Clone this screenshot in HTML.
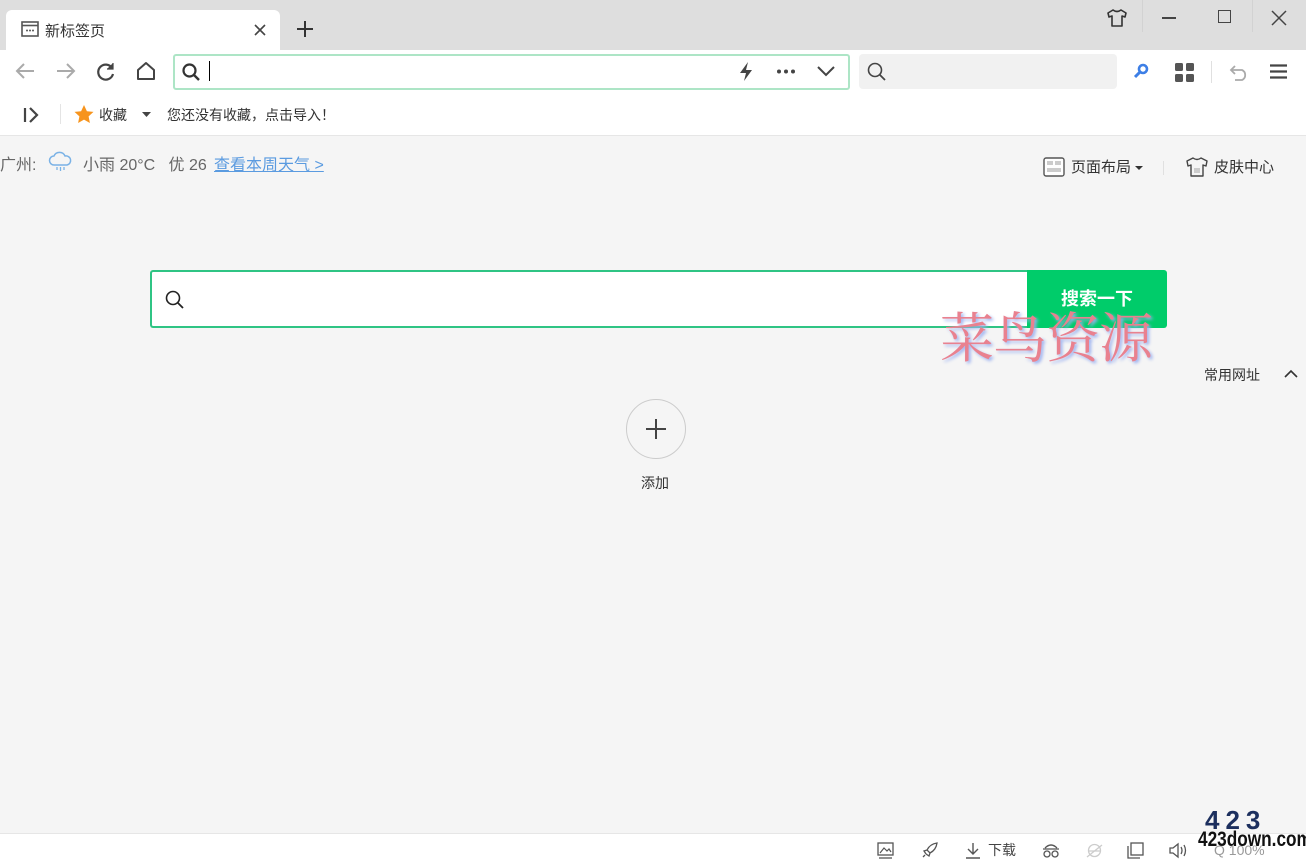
<!DOCTYPE html>
<html><head><meta charset="utf-8"><style>
*{margin:0;padding:0;box-sizing:border-box}
body{width:1306px;height:866px;overflow:hidden;background:#f5f5f5;font-family:"Liberation Sans","Noto Sans CJK SC",sans-serif;position:relative;color:#333}
.abs{position:absolute}
svg{position:absolute;overflow:visible}
</style></head><body>
<div class="abs" style="left:0;top:0;width:1306px;height:50px;background:#dedede"></div>
<div class="abs" style="left:6px;top:10px;width:274px;height:41px;background:#fff;border-radius:6px 6px 0 0"></div>
<svg style="left:21px;top:21px" width="18" height="16"><rect x="1" y="1" width="16" height="14" fill="none" stroke="#555" stroke-width="1.6"/><line x1="1" y1="4.5" x2="17" y2="4.5" stroke="#555" stroke-width="1.6"/><circle cx="6" cy="9.5" r="1" fill="#555"/><circle cx="9" cy="9.5" r="1" fill="#555"/><circle cx="12" cy="9.5" r="1" fill="#555"/></svg>
<div class="abs" style="left:45px;top:20px;font-size:15px;color:#333">新标签页</div>
<svg style="left:254px;top:24px" width="12" height="12"><path d="M1 1L11 11M11 1L1 11" stroke="#444" stroke-width="1.6"/></svg>
<svg style="left:296px;top:20px" width="18" height="18"><path d="M9 1V17M1 9H17" stroke="#333" stroke-width="2"/></svg>
<svg style="left:1107px;top:9px" width="20" height="18"><path d="M6 1L1 4L2 8L5 7V17H15V7L18 8L19 4L14 1Q10 4 6 1Z" fill="none" stroke="#333" stroke-width="1.6" stroke-linejoin="round"/></svg>
<div class="abs" style="left:1142px;top:0;width:1px;height:32px;background:#d2d2d2"></div>
<div class="abs" style="left:1162px;top:17px;width:14px;height:1.5px;background:#444"></div>
<div class="abs" style="left:1218px;top:10px;width:13px;height:13px;border:1.5px solid #444"></div>
<div class="abs" style="left:1252px;top:0;width:1px;height:32px;background:#d2d2d2"></div>
<svg style="left:1272px;top:11px" width="14" height="14"><path d="M0 0L14 14M14 0L0 14" stroke="#444" stroke-width="1.5"/></svg>
<div class="abs" style="left:0;top:50px;width:1306px;height:86px;background:#fff;border-bottom:1px solid #e6e6e6"></div>
<svg style="left:15px;top:62px" width="20" height="18"><path d="M19 9H2M9 2L2 9L9 16" fill="none" stroke="#aaa" stroke-width="2"/></svg>
<svg style="left:56px;top:62px" width="20" height="18"><path d="M1 9H18M11 2L18 9L11 16" fill="none" stroke="#aaa" stroke-width="2"/></svg>
<svg style="left:96px;top:62px" width="20" height="20"><path d="M16 6A7.5 7.5 0 1 0 17 12" fill="none" stroke="#444" stroke-width="2.2"/><path d="M17 1V7H11" fill="#444" stroke="#444" stroke-width="1.2"/></svg>
<svg style="left:136px;top:62px" width="20" height="18"><path d="M2 8L10 1L18 8V17H2Z" fill="none" stroke="#444" stroke-width="2" stroke-linejoin="round"/></svg>
<div class="abs" style="left:173px;top:54px;width:677px;height:36px;border:2px solid #ade5c6;border-radius:3px;background:#fff"></div>
<svg style="left:182px;top:63px" width="18" height="18"><circle cx="7.5" cy="7.5" r="6" fill="none" stroke="#333" stroke-width="2.2"/><path d="M12 12L17 17" stroke="#333" stroke-width="2.4"/></svg>
<div class="abs" style="left:209px;top:61px;width:1px;height:20px;background:#000"></div>
<svg style="left:738px;top:62px" width="16" height="19"><path d="M10 0L2 11H8L6 19L14 8H8Z" fill="#444"/></svg>
<svg style="left:776px;top:69px" width="20" height="5"><circle cx="3" cy="2.5" r="2" fill="#444"/><circle cx="10" cy="2.5" r="2" fill="#444"/><circle cx="17" cy="2.5" r="2" fill="#444"/></svg>
<svg style="left:817px;top:66px" width="18" height="10"><path d="M1 1L9 9L17 1" fill="none" stroke="#444" stroke-width="2"/></svg>
<div class="abs" style="left:859px;top:54px;width:258px;height:35px;background:#f1f1f1;border-radius:4px"></div>
<svg style="left:867px;top:62px" width="20" height="20"><circle cx="8" cy="8" r="6.5" fill="none" stroke="#444" stroke-width="1.6"/><path d="M13 13L18 18" stroke="#444" stroke-width="1.8"/></svg>
<svg style="left:1133px;top:63px" width="16" height="16"><circle cx="10" cy="6" r="4" fill="none" stroke="#3d7fe6" stroke-width="2.6"/><path d="M7 9L2 14" stroke="#3d7fe6" stroke-width="3"/></svg>
<svg style="left:1175px;top:63px" width="20" height="20"><rect x="0" y="0" width="8" height="8" rx="1.5" fill="#555"/><rect x="11" y="0" width="8" height="8" rx="1.5" fill="#555"/><rect x="0" y="11" width="8" height="8" rx="1.5" fill="#555"/><rect x="11" y="11" width="8" height="8" rx="1.5" fill="#555"/></svg>
<div class="abs" style="left:1211px;top:61px;width:1px;height:22px;background:#e0e0e0"></div>
<svg style="left:1230px;top:63px" width="20" height="18"><path d="M5 3L1 7L5 11" fill="none" stroke="#aaa" stroke-width="1.8"/><path d="M1 7H12A5.5 5.5 0 0 1 12 17H5" fill="none" stroke="#aaa" stroke-width="1.8"/></svg>
<svg style="left:1270px;top:64px" width="17" height="15"><path d="M0 1.5H17M0 7.5H17M0 13.5H17" stroke="#444" stroke-width="2.2"/></svg>
<svg style="left:23px;top:107px" width="16" height="16"><path d="M2 1V15" stroke="#444" stroke-width="2.2"/><path d="M7 1L14 8L7 15" fill="none" stroke="#444" stroke-width="2.2"/></svg>
<div class="abs" style="left:60px;top:104px;width:1px;height:20px;background:#e4e4e4"></div>
<svg style="left:74px;top:105px" width="20" height="19"><path d="M10 0L12.9 6.2L19.5 6.9L14.6 11.4L15.9 18L10 14.6L4.1 18L5.4 11.4L0.5 6.9L7.1 6.2Z" fill="#f7941d"/></svg>
<div class="abs" style="left:99px;top:105px;font-size:14px;color:#333">收藏</div>
<svg style="left:142px;top:112px" width="9" height="6"><path d="M0 0H9L4.5 5Z" fill="#444"/></svg>
<div class="abs" style="left:167px;top:105px;font-size:14px;color:#333">您还没有收藏，点击导入！</div>
<div class="abs" style="left:0;top:151px;font-size:16px;color:#666;white-space:nowrap">广州: </div>
<svg style="left:48px;top:152px" width="25" height="20"><path d="M6 13A4.5 4.5 0 0 1 6 4A6 6 0 0 1 17 4A4.5 4.5 0 0 1 19 13Z" fill="none" stroke="#7ab2e6" stroke-width="1.5"/><path d="M9 15V18M12.5 15V19M16 15V18" stroke="#7ab2e6" stroke-width="1.3"/></svg>
<div class="abs" style="left:83px;top:151px;font-size:16px;color:#666;white-space:nowrap">小雨 20°C&nbsp;&nbsp;&nbsp;优 26</div>
<div class="abs" style="left:214px;top:151px;font-size:16px;color:#5b9be0;text-decoration:underline;white-space:nowrap">查看本周天气 &gt;</div>
<svg style="left:1043px;top:157px" width="22" height="20"><rect x="1" y="1" width="20" height="18" rx="2" fill="#fff" stroke="#555" stroke-width="1.4"/><rect x="4" y="4" width="6" height="4" fill="#ccc"/><rect x="12" y="4" width="6" height="4" fill="#ccc"/><rect x="4" y="11" width="14" height="4" fill="#ccc"/></svg>
<div class="abs" style="left:1071px;top:156px;font-size:15px;color:#333">页面布局</div>
<svg style="left:1135px;top:166px" width="8" height="5"><path d="M0 0H8L4 4Z" fill="#333"/></svg>
<div class="abs" style="left:1163px;top:161px;width:1px;height:14px;background:#e0e0e0"></div>
<svg style="left:1186px;top:157px" width="22" height="20"><path d="M7 1L1 4L2 9L5 8V19H17V8L20 9L21 4L15 1Q11 4 7 1Z" fill="none" stroke="#444" stroke-width="1.4" stroke-linejoin="round"/><rect x="8" y="11" width="6" height="5" fill="#ccc"/></svg>
<div class="abs" style="left:1214px;top:156px;font-size:15px;color:#333">皮肤中心</div>
<div class="abs" style="left:150px;top:270px;width:880px;height:58px;border:2px solid #2fc484;border-right:none;background:#fff;border-radius:3px 0 0 3px"></div>
<svg style="left:165px;top:290px" width="20" height="20"><circle cx="8" cy="8" r="6.5" fill="none" stroke="#222" stroke-width="1.6"/><path d="M13 13L18 18" stroke="#222" stroke-width="1.8"/></svg>
<div class="abs" style="left:1027px;top:270px;width:140px;height:58px;background:#00cc6a;border-radius:0 3px 3px 0;color:#fff;font-size:18px;font-weight:bold;text-align:center;line-height:58px">搜索一下</div>
<div class="abs" style="left:940px;top:296px;font-size:54px;font-family:'Noto Serif CJK SC',serif;color:#e9818f;text-shadow:2px 2px 3px #9ab0f0;white-space:nowrap;letter-spacing:-1px">菜鸟资源</div>
<div class="abs" style="left:1204px;top:365px;font-size:14px;color:#333">常用网址</div>
<svg style="left:1284px;top:369px" width="14" height="9"><path d="M1 8L7 2L13 8" fill="none" stroke="#333" stroke-width="1.6"/></svg>
<div class="abs" style="left:626px;top:399px;width:60px;height:60px;border:1px solid #ccc;border-radius:50%"></div>
<svg style="left:646px;top:419px" width="20" height="20"><path d="M10 0V20M0 10H20" stroke="#444" stroke-width="2"/></svg>
<div class="abs" style="left:641px;top:473px;font-size:14px;color:#333">添加</div>
<div class="abs" style="left:0;top:833px;width:1306px;height:33px;background:#fff;border-top:1px solid #e6e6e6"></div>
<svg style="left:877px;top:842px" width="17" height="17"><rect x="1" y="1" width="15" height="12" fill="none" stroke="#555" stroke-width="1.3"/><path d="M3 11L7 6L10 9L12 7L14 10" fill="none" stroke="#555" stroke-width="1.2"/><path d="M2 16H15" stroke="#555" stroke-width="1.3"/></svg>
<svg style="left:921px;top:841px" width="18" height="18"><path d="M16 2Q9 3 6 9L9 12Q15 9 16 2ZM6 9L3 10L5 13M9 12L8 15L5 13M4 14L2 16" fill="none" stroke="#555" stroke-width="1.3"/></svg>
<svg style="left:965px;top:842px" width="16" height="17"><path d="M8 1V12M3 7L8 12L13 7M1 16H15" fill="none" stroke="#555" stroke-width="1.4"/></svg>
<div class="abs" style="left:988px;top:840px;font-size:14px;color:#444">下载</div>
<svg style="left:1042px;top:842px" width="18" height="17"><path d="M3 6Q9 0 15 6M1 7H17" fill="none" stroke="#555" stroke-width="1.3"/><circle cx="5" cy="12" r="3" fill="none" stroke="#555" stroke-width="1.3"/><circle cx="13" cy="12" r="3" fill="none" stroke="#555" stroke-width="1.3"/></svg>
<svg style="left:1086px;top:842px" width="17" height="17"><circle cx="8.5" cy="8.5" r="6" fill="none" stroke="#ccc" stroke-width="1.3"/><path d="M2 9H15M1 15L16 3" stroke="#ccc" stroke-width="1.3"/></svg>
<svg style="left:1127px;top:842px" width="17" height="17"><rect x="4" y="1" width="12" height="12" fill="none" stroke="#555" stroke-width="1.3"/><path d="M1 4V16H13" fill="none" stroke="#555" stroke-width="1.3"/></svg>
<svg style="left:1168px;top:842px" width="20" height="17"><path d="M2 6H5L10 2V15L5 11H2Z" fill="none" stroke="#555" stroke-width="1.3"/><path d="M13 5Q15 8.5 13 12M16 3Q19 8.5 16 14" fill="none" stroke="#555" stroke-width="1.3"/></svg>
<div class="abs" style="left:1214px;top:842px;font-size:14px;color:#999">Q 100%</div>
<div class="abs" style="left:1205px;top:808px;width:92px;height:24px;font-family:'Liberation Sans',sans-serif;font-weight:900;font-size:26px;color:#1c2f5e;letter-spacing:6px;line-height:24px">423</div>
<div class="abs" style="left:1198px;top:827px;width:102px;height:26px;font-family:'Liberation Sans Narrow','Liberation Sans',sans-serif;font-weight:bold;font-size:21px;color:#111;line-height:26px;transform:scaleX(0.82);transform-origin:left;white-space:nowrap;text-shadow:0 0 2px #fff">423down.com</div>
</body></html>
